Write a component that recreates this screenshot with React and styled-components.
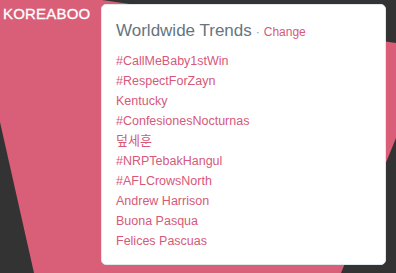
import React from "react";
import styled, { createGlobalStyle } from "styled-components";

const trends = [
  { label: "#CallMeBaby1stWin" },
  { label: "#RespectForZayn" },
  { label: "Kentucky" },
  { label: "#ConfesionesNocturnas" },
  { label: "덮세훈", korean: true },
  { label: "#NRPTebakHangul" },
  { label: "#AFLCrowsNorth" },
  { label: "Andrew Harrison" },
  { label: "Buona Pasqua" },
  { label: "Felices Pascuas" },
];

const App = () => {
  return (
    <>
      <GlobalStyle />
      <Stage>
        <Logo>KOREABOO</Logo>
        <Card>
          <Header>
            <Title>Worldwide Trends</Title>
            <Dot>·</Dot>
            <Change href="#">Change</Change>
          </Header>
          <TrendList>
            {trends.map((t) => (
              <Trend key={t.label}>
                <TrendLink href="#" $korean={t.korean} lang={t.korean ? "ko" : undefined}>
                  {t.label}
                </TrendLink>
              </Trend>
            ))}
          </TrendList>
        </Card>
      </Stage>
    </>
  );
};

const GlobalStyle = createGlobalStyle`
  html, body { margin: 0; padding: 0; background: #333333; }
  * { box-sizing: border-box; }
`;

const Stage = styled.div`
  position: relative;
  width: 396px;
  height: 273px;
  overflow: hidden;
  background: #333333;
  display: flex;
  align-items: flex-start;
  padding: 4px 0 0 3px;

  &::before {
    content: "";
    position: absolute;
    inset: 0;
    background: #d95f78;
    clip-path: polygon(0 0, 102px 0, 396px 43px, 396px 138px, 341px 273px, 34px 273px, 0 122px);
  }
`;

const Logo = styled.div`
  position: relative;
  width: 98px;
  margin-top: 2px;
  color: #ffffff;
  font-family: "Liberation Sans", Arial, sans-serif;
  font-size: 15px;
  letter-spacing: 0.2px;
  line-height: 16px;
  -webkit-text-stroke: 0.3px #ffffff;
`;

const Card = styled.div`
  position: relative;
  width: 285px;
  height: 261px;
  background: #ffffff;
  border: 1px solid #e1e8ed;
  border-radius: 5px;
  padding: 15px 14px 14px;
  font-family: "Liberation Sans", Arial, sans-serif;
`;

const Header = styled.div`
  display: flex;
  align-items: baseline;
  line-height: 22px;
  margin-bottom: 7px;
`;

const Title = styled.span`
  color: #66757f;
  font-size: 17px;
`;

const Dot = styled.span`
  color: #8899a6;
  font-size: 12px;
  margin: 0 4px;
`;

const Change = styled.a`
  color: #d6597a;
  font-size: 12px;
  text-decoration: none;
`;

const TrendList = styled.ul`
  list-style: none;
  margin: 0;
  padding: 0;
`;

const Trend = styled.li`
  line-height: 20px;
  height: 20px;
`;

const TrendLink = styled.a`
  color: #d6597a;
  font-family: ${(p) =>
    p.$korean
      ? `"Noto Sans CJK KR", "Noto Sans CJK SC", sans-serif`
      : `"Liberation Sans", Arial, sans-serif`};
  font-size: ${(p) => (p.$korean ? "13px" : "12.5px")};
  text-decoration: none;
`;

export default App;
